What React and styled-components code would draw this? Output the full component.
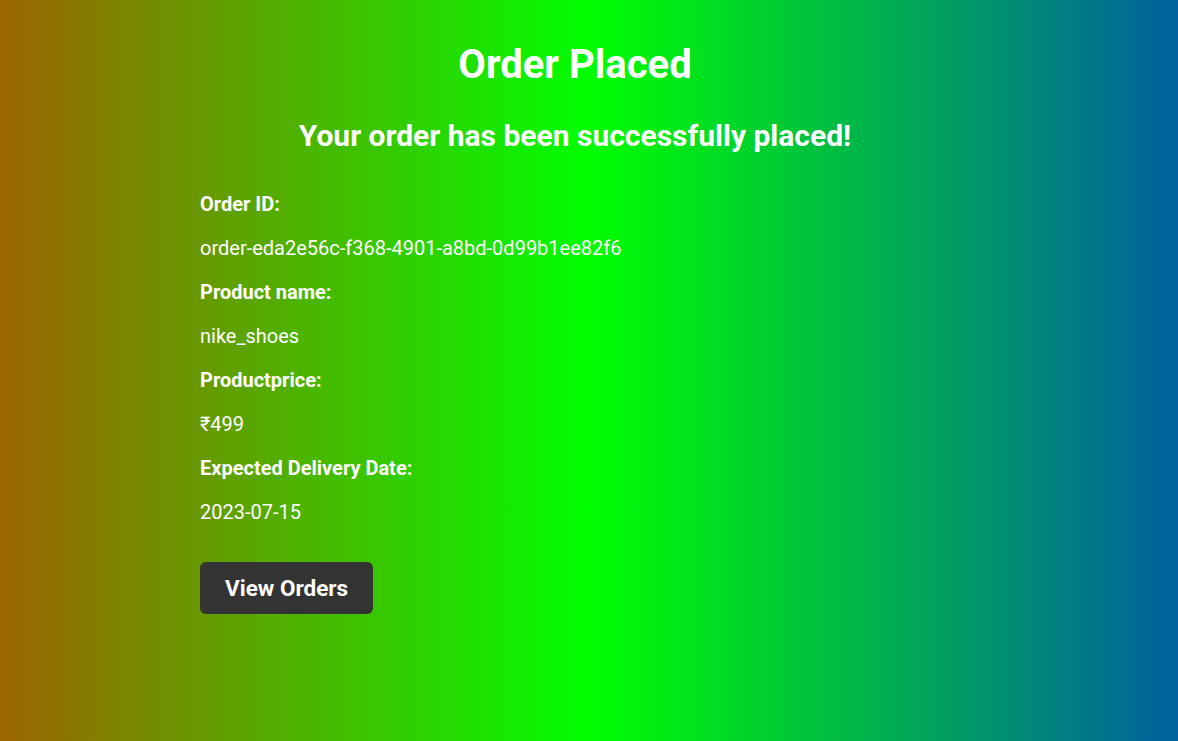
import React from "react";
import styled, { createGlobalStyle } from "styled-components";

const Global = createGlobalStyle`
  html, body { margin: 0; padding: 0; }
  body { font-family: Roboto, "Liberation Sans", sans-serif; }
`;

const Page = styled.div`
  width: 100%;
  min-height: 741px;
  box-sizing: border-box;
  background: linear-gradient(to right, #9c6400, #00ff00, #0060a0);
  padding: 41px 0 0 200px;
  color: #ffffff;
`;

const Card = styled.div`
  width: 750px;
  display: flex;
  flex-direction: column;
`;

const Title = styled.h1`
  margin: 0;
  font-size: 40px;
  line-height: 48px;
  font-weight: 700;
  text-align: center;
`;

const Subtitle = styled.h2`
  margin: 29px 0 0;
  font-size: 30px;
  line-height: 36px;
  font-weight: 700;
  text-align: center;
`;

const Details = styled.div`
  margin-top: 38px;
  display: flex;
  flex-direction: column;
  gap: 20px;
`;

const Line = styled.p`
  margin: 0;
  font-size: 20px;
  line-height: 24px;
  font-weight: ${(p) => (p.$label ? 700 : 400)};
`;

const Button = styled.button`
  align-self: flex-start;
  margin-top: 38px;
  height: 52px;
  padding: 0 25px;
  border: none;
  border-radius: 6px;
  background: #333333;
  color: #ffffff;
  font-family: Roboto, "Liberation Sans", sans-serif;
  font-size: 22.5px;
  font-weight: 700;
  cursor: pointer;
`;

const rows = [
  ["Order ID:", "order-eda2e56c-f368-4901-a8bd-0d99b1ee82f6"],
  ["Product name:", "nike_shoes"],
  ["Productprice:", "₹499"],
  ["Expected Delivery Date:", "2023-07-15"],
];

export default function App() {
  return (
    <Page>
      <Global />
      <Card>
        <Title>Order Placed</Title>
        <Subtitle>Your order has been successfully placed!</Subtitle>
        <Details>
          {rows.map(([label, value]) => (
            <React.Fragment key={label}>
              <Line $label>{label}</Line>
              <Line>{value}</Line>
            </React.Fragment>
          ))}
        </Details>
        <Button>View Orders</Button>
      </Card>
    </Page>
  );
}
